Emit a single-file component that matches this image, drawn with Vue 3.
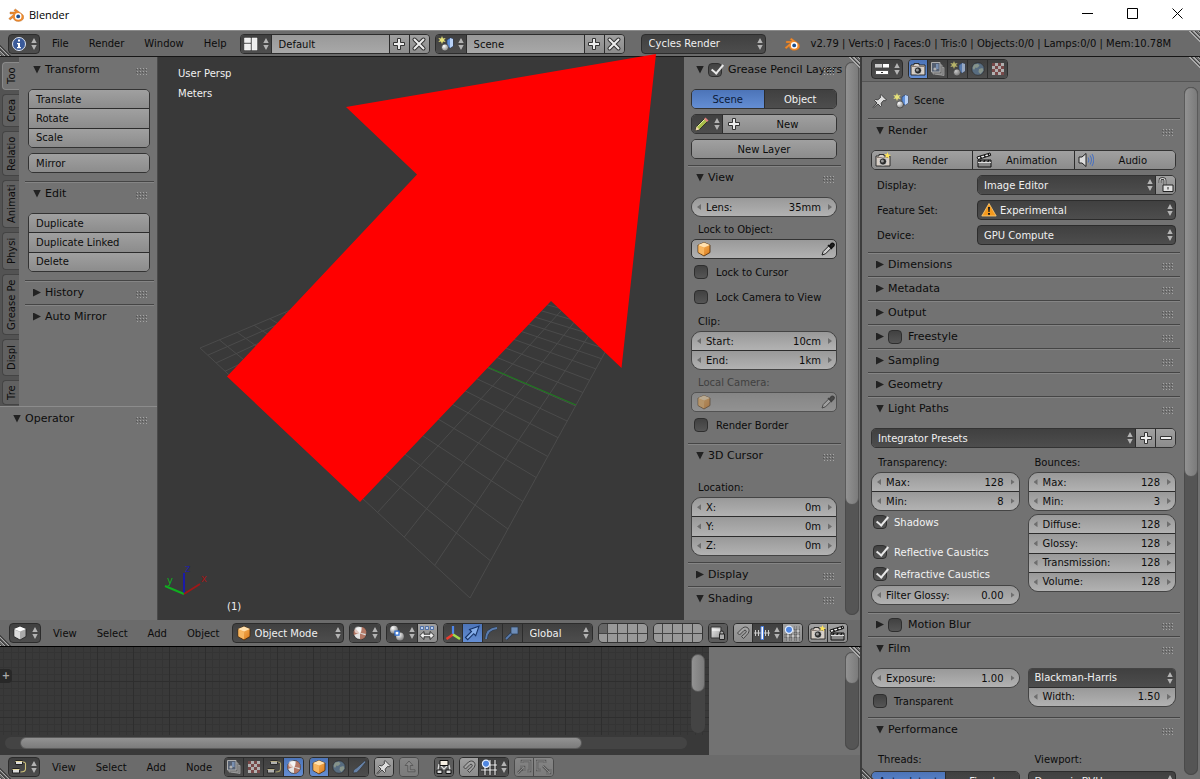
<template>
  <div class="app">
    <!-- Shared icon symbols -->
    <svg class="symbols" aria-hidden="true">
      <defs>
        <linearGradient id="g-orange" x1="0" y1="0" x2="1" y2="1">
          <stop offset="0" stop-color="#ffc46b" />
          <stop offset="1" stop-color="#d9781a" />
        </linearGradient>
        <radialGradient id="g-ball" cx=".35" cy=".3" r=".8">
          <stop offset="0" stop-color="#fff" />
          <stop offset="1" stop-color="#777" />
        </radialGradient>
        <linearGradient id="g-grey" x1="0" y1="0" x2="1" y2="1">
          <stop offset="0" stop-color="#eee" />
          <stop offset="1" stop-color="#999" />
        </linearGradient>
      </defs>
      <symbol id="i-updown" viewBox="0 0 6 14">
        <path d="M3 1l2.700 5H.3zM3 13l2.700-5H.3z" fill="#b4b4b4" />
      </symbol>
      <symbol id="i-grip" viewBox="0 0 12 7">
        <path d="M1 0h1v1H1zM4 0h1v1H4zM7 0h1v1H7zM10 0h1v1h-1zM1 3h1v1H1zM4 3h1v1H4zM7 3h1v1H7zM10 3h1v1h-1zM1 6h1v1H1zM4 6h1v1H4zM7 6h1v1H7zM10 6h1v1h-1z" fill="#a5a5a5" />
        <path d="M0 1h1v1H0zM3 1h1v1H3zM6 1h1v1H6zM9 1h1v1H9zM0 4h1v1H0zM3 4h1v1H3zM6 4h1v1H6zM9 4h1v1H9z" fill="#555" />
      </symbol>
      <symbol id="i-blender" viewBox="0 0 16 16">
        <path d="M.8 11.500L6 7H2V5h5.800L5.800 3.400 7.400 2l7 5.300c2.700 2.400 1.300 7-3.800 7.100-3.300.1-5.400-1.900-5.400-4L2.200 13z" fill="#ef8a2b" stroke="#a8652d" stroke-width=".4" />
        <circle cx="10.200" cy="9.400" r="3.300" fill="#fff" />
        <circle cx="10.200" cy="9.400" r="1.900" fill="#1d4f8f" />
      </symbol>
      <symbol id="i-info" viewBox="0 0 16 16">
        <circle cx="8" cy="8" r="6.500" fill="#3a5a9a" stroke="#dfe6f2" />
        <path d="M7 3.500h2v2H7zM6 7h3v4h1v1.200H6V11h1V8.200H6z" fill="#fff" />
      </symbol>
      <symbol id="i-layout" viewBox="0 0 16 16">
        <path d="M1.500 2h6v4.500h-6zM1.500 8h6v6h-6zM9 2h5v12H9z" fill="#eee" stroke="#fff" stroke-width=".5" />
      </symbol>
      <symbol id="i-scene" viewBox="0 0 16 16">
        <path d="M4 0l1 2.600L7.700 2 6 4l1.700 2L5 5.500 4 8 3 5.500.3 6 2 4 .3 2 3 2.600z" fill="#e6e27a" />
        <path d="M9 4l3-2 3 1v7l-3 2-3-1z" fill="#5f8fd8" stroke="#1f3667" stroke-width=".6" />
        <path d="M12 2l3 1v7l-3 2z" fill="#b9d2f7" />
        <circle cx="7" cy="11.500" r="3.500" fill="url(#g-ball)" stroke="#333" stroke-width=".6" />
      </symbol>
      <symbol id="i-plus" viewBox="0 0 16 16">
        <path d="M6.500 2.500h3v4h4v3h-4v4h-3v-4h-4v-3h4z" fill="#eee" stroke="#333" />
      </symbol>
      <symbol id="i-minus" viewBox="0 0 16 16">
        <path d="M2.500 6.500h11v3h-11z" fill="#eee" stroke="#333" />
      </symbol>
      <symbol id="i-x" viewBox="0 0 16 16">
        <path d="M3.500 3.500l9 9M12.500 3.500l-9 9" stroke="#333" stroke-width="4" stroke-linecap="round" />
        <path d="M3.500 3.500l9 9M12.500 3.500l-9 9" stroke="#eee" stroke-width="2" stroke-linecap="round" />
      </symbol>
      <symbol id="i-cube" viewBox="0 0 16 16">
        <path d="M2 4l6-2.500L14 4v7.500L8 15l-6-3.500z" fill="url(#g-orange)" stroke="#4a2a08" stroke-width=".8" />
        <path d="M2 4l6-2.500L14 4 8 6.500z" fill="#ffe0ae" />
        <path d="M2.500 4.800L8 7v7.200l-5.500-3z" fill="#f7b661" />
      </symbol>
      <symbol id="i-cube-grey" viewBox="0 0 16 16">
        <path d="M2 4l6-2.500L14 4v7.500L8 15l-6-3.500z" fill="#aaa" stroke="#222" stroke-width=".8" />
        <path d="M2 4l6-2.500L14 4 8 6.500z" fill="#fff" />
        <path d="M2.500 4.800L8 7v7.200l-5.500-3z" fill="#ddd" />
      </symbol>
      <symbol id="i-pencil" viewBox="0 0 16 16">
        <path d="M1.500 14.500l1-4L11 2l3 3-8.500 8.500z" fill="#a8bd4a" stroke="#222" stroke-width=".8" />
        <path d="M1.500 14.500l1-4 3 3z" fill="#eed7ae" />
        <path d="M10 3l1.500-1.500 3 3L13 6z" fill="#e08080" />
        <path d="M3.500 10.500l7-7" stroke="#e3eda2" />
      </symbol>
      <symbol id="i-dropper" viewBox="0 0 16 16">
        <path d="M2 14l1.200-3.500L9 4.700l2.300 2.300-5.800 5.800z" fill="#ccc" stroke="#222" />
        <path d="M8 4l4 4M9.500 5l2-2.500c1-1.200 3.500.8 2.400 2.200L11.500 7z" stroke="#111" stroke-width="1.500" fill="#222" />
      </symbol>
      <symbol id="i-props" viewBox="0 0 16 16">
        <path d="M1 3h14v4H1zM1 9h14v5H1z" fill="#555" />
        <path d="M9 3h6v3.500H9z" fill="#fff" />
        <path d="M1 3h7v3.500H1z" fill="#ccc" />
        <path d="M2 10h12v3H2z" fill="#fff" />
        <path d="M7 11h2v1H7z" fill="#333" />
      </symbol>
      <symbol id="i-camera" viewBox="0 0 16 16">
        <path d="M1 4h3V2.500h5V4h6v10H1z" fill="#d8cfc6" stroke="#222" stroke-width=".9" />
        <path d="M1.500 5.500h13" stroke="#8a7d75" />
        <circle cx="8" cy="9.500" r="3.700" fill="#2b2b2b" stroke="#eee" stroke-width=".8" />
        <circle cx="7.400" cy="8.900" r="1.500" fill="#999" />
      </symbol>
      <symbol id="i-camera-new" viewBox="0 0 16 16">
        <use href="#i-camera" />
        <path d="M12.500 0l.9 2.400L16 3l-2.100 1.200.3 2.500-1.800-1.600-2.300 1 .9-2.200L9.300 2l2.400.2z" fill="#ffe55a" />
      </symbol>
      <symbol id="i-layers" viewBox="0 0 16 16">
        <path d="M5 5l9 1.500v8L5 13z" fill="#888" stroke="#ccc" stroke-width=".8" />
        <path d="M3 3l9 1v9H3z" fill="#777" stroke="#ccc" stroke-width=".8" />
        <path d="M1.500 1.500h8.500v9.500H1.500z" fill="#5d6d86" stroke="#ddd" />
        <circle cx="5" cy="8" r="1.600" fill="#ddd" />
        <path d="M6 3h2.500v5H6z" fill="#8fb0e0" />
      </symbol>
      <symbol id="i-world" viewBox="0 0 16 16">
        <circle cx="8" cy="8" r="6.300" fill="#5f7c99" stroke="#222" stroke-width=".7" />
        <path d="M4 3.500l4-.8 1.500 2L7 7 5.500 6.500 4 9 2.500 7zM9 8l3.500-1 1 2.500-3 3.500L8.500 11z" fill="#a3b5a8" />
      </symbol>
      <symbol id="i-checker" viewBox="0 0 16 16">
        <path d="M2 2h12v12H2z" fill="#ddd" />
        <path d="M2 2h3v3H2zM8 2h3v3H8zM5 5h3v3H5zM11 5h3v3h-3zM2 8h3v3H2zM8 8h3v3H8zM5 11h3v3H5zM11 11h3v3h-3z" fill="#8f4a4a" />
      </symbol>
      <symbol id="i-pin" viewBox="0 0 16 16">
        <path d="M9 1.500l5.500 5.500-1.300.8-1.700-.3-2.300 2.700.3 2.300-1 1L6 11l-4.500 3.800L1 14.300 5 10 2.500 7.500l1-1 2.300.3 2.700-2.300-.3-1.700z" fill="#ddd" stroke="#333" stroke-width=".9" />
      </symbol>
      <symbol id="i-clap" viewBox="0 0 16 16">
        <path d="M2 8h13v7H2z" fill="#888" stroke="#111" />
        <path d="M1 5l13-4 .8 2.300L2 7.500z" fill="#eee" stroke="#111" />
        <path d="M4 4l1.500 2.400M8 3l1.500 2M12 1.800L13.400 4M5 8l-1.500 2.500M9 8l-1.500 2.500M13 8l-1.500 2.500" stroke="#111" stroke-width="1.400" />
        <path d="M2 10.500h13" stroke="#ddd" />
      </symbol>
      <symbol id="i-audio" viewBox="0 0 16 16">
        <path d="M1 5h3l4-3.500v13L4 11H1z" fill="#ddd" stroke="#222" />
        <path d="M10 5.500q1.700 2.500 0 5M12 3.500q3 4.500 0 9M14 2q3.500 6 0 12" fill="none" stroke="#4f74bd" stroke-width="1.100" />
      </symbol>
      <symbol id="i-lock" viewBox="0 0 16 16">
        <path d="M2 6V3.500q0-2 2.500-2T7 3.500V8" fill="none" stroke="#222" stroke-width="2.600" />
        <path d="M2 6V3.500q0-2 2.500-2T7 3.500V8" fill="none" stroke="#ddd" stroke-width="1.200" />
        <path d="M5 8h10v6.500H5z" fill="#e2e2e2" stroke="#222" />
        <path d="M9.500 10h1v2.500h-1z" fill="#222" />
      </symbol>
      <symbol id="i-warn" viewBox="0 0 16 16">
        <path d="M8 1.500L15.200 14H.8z" fill="#f59a1e" stroke="#ffcf7a" stroke-width=".8" />
        <path d="M7 5h2l-.4 5H7.400zM7 11h2v1.800H7z" fill="#1a1a1a" />
      </symbol>
      <symbol id="i-material" viewBox="0 0 16 16">
        <circle cx="8" cy="8" r="6.500" fill="#e4e4e4" stroke="#222" stroke-width=".7" />
        <path d="M8.500 8L10 1.800A6.500 6.500 0 0 1 14.300 9zM8 8.500L14 10.500A6.500 6.500 0 0 1 8 14.500zM7.500 8L1.800 10A6.500 6.500 0 0 1 3.500 3.500z" fill="#a8644f" opacity=".85" />
        <circle cx="6" cy="5" r="3.500" fill="#fff" opacity=".6" />
      </symbol>
      <symbol id="i-pivot" viewBox="0 0 16 16">
        <circle cx="5" cy="4.700" r="3.900" fill="url(#g-ball)" />
        <circle cx="11" cy="11.500" r="3.900" fill="url(#g-ball)" />
        <path d="M6 6.200h4v4H6z" fill="#fff" stroke="#2f6fd0" stroke-width="1.300" />
      </symbol>
      <symbol id="i-manip" viewBox="0 0 16 16">
        <path d="M1.500 1.500h3v3h-3zM6.500 1.500h3v3h-3zM11.500 1.500h3v3h-3z" fill="#bcd0f0" stroke="#3a5f9f" stroke-width=".8" />
        <path d="M.8 10.500L5 6.500v2.700h6V6.500l4.200 4-4.200 4v-2.700H5v2.700z" fill="#eee" stroke="#222" stroke-width=".9" />
      </symbol>
      <symbol id="i-axes" viewBox="0 0 16 16">
        <path d="M8 9.500V1" stroke="#4f86ea" stroke-width="2.200" />
        <path d="M8 9.500L1.500 14" stroke="#ea3b2e" stroke-width="2.600" />
        <path d="M8 9.500L15 14" stroke="#a5dc4a" stroke-width="2.600" />
      </symbol>
      <symbol id="i-arrow" viewBox="0 0 16 16">
        <path d="M1.500 12.500L7.500 6.500 5.500 4.500 15 1.200 11.700 10.700 9.700 8.700 3.700 14.700z" fill="#85aeea" stroke="#173468" stroke-width="1.100" />
      </symbol>
      <symbol id="i-arc" viewBox="0 0 16 16">
        <path d="M2 14Q2.500 4 13 3" fill="none" stroke="#29394f" stroke-width="3.200" />
        <path d="M2 14Q2.500 4 13 3" fill="none" stroke="#5a7cae" stroke-width="1.800" />
      </symbol>
      <symbol id="i-scale" viewBox="0 0 16 16">
        <path d="M2 14l7-7" stroke="#29394f" stroke-width="3.200" />
        <path d="M2 14l7-7" stroke="#5a7cae" stroke-width="1.800" />
        <path d="M7 2h7v7H7z" fill="#6d8db8" stroke="#29394f" stroke-width=".7" />
      </symbol>
      <symbol id="i-locklayer" viewBox="0 0 16 16">
        <path d="M1 2h10v11H1z" fill="url(#g-grey)" stroke="#333" />
        <path d="M2 5h8" stroke="#fff" />
        <path d="M10 9V7.500q0-1.500 1.800-1.500t1.800 1.500V9M9.500 9h5v5.500h-5z" fill="#aaa" stroke="#222" />
      </symbol>
      <symbol id="i-magnet" viewBox="0 0 16 16">
        <path d="M2.500 8l5-5c4.500-3 8.500 1.500 5.500 5.500L8.500 13.500 6.500 11.500l4.500-4c1-1.500-.5-3-2-2L4.500 10z" fill="#a5a5a5" stroke="#444" />
      </symbol>
      <symbol id="i-snapinc" viewBox="0 0 16 16">
        <path d="M0 8h16M1.500 5v6M4.500 5v6M11.500 5v6M14.500 5v6" stroke="#ccc" />
        <path d="M7 1.500h2.500v13H7z" fill="#fff" stroke="#4a7fe0" />
      </symbol>
      <symbol id="i-snapgrid" viewBox="0 0 16 16">
        <path d="M0 11h16M4 6v10M9 1v15M14 1v15M7 6h9" stroke="#222" stroke-width="2.400" />
        <path d="M0 11h16M4 6v10M9 1v15M14 1v15M7 6h9" stroke="#eee" stroke-width="1.200" />
        <circle cx="5" cy="4.700" r="3.600" fill="#4f86e0" stroke="#e5eefc" stroke-width="1.200" />
      </symbol>
      <symbol id="i-nodes" viewBox="0 0 16 16">
        <path d="M4.500 1.500h7v4h-7zM1.500 9.500h7v4.500h-7z" fill="#ddd" stroke="#222" />
        <path d="M4.500 2.500h7M1.500 10.500h7" stroke="#e6d9a0" />
        <path d="M12 3q3 0 2.500 3v4q0 3-5 3" fill="none" stroke="#ccc079" stroke-width="1.100" />
      </symbol>
      <symbol id="i-brush" viewBox="0 0 16 16">
        <path d="M2 14q0-4 3.500-5L13.500 2q2-.5 1 1.500L8 11.500Q6 14.500 2 14z" fill="#6682a8" stroke="#333" stroke-width=".7" />
      </symbol>
      <symbol id="i-up" viewBox="0 0 16 16">
        <path d="M8 2l4 4.500H9.200v4.300H14v2H6.800V6.500H4z" fill="#aaa" stroke="#444" stroke-width=".9" />
      </symbol>
      <symbol id="i-backdrop" viewBox="0 0 16 16">
        <path d="M3 5l-1 6M13 6l1 5M5 7l3 3 3-3" stroke="#ddd" stroke-width="1.300" fill="none" />
        <path d="M4 1.500h8v5H4z" fill="#f5eee2" stroke="#111" />
        <path d="M1 11h5v3.500H1zM10 11h5v3.500h-5z" fill="#ddd" stroke="#111" />
      </symbol>
      <symbol id="i-copy" viewBox="0 0 16 16">
        <path d="M6 4V2h8v10h-3M2 14l6-6M4 8h4v4" fill="none" stroke="#444" stroke-width="2.600" />
        <path d="M6 4V2h8v10h-3M2 14l6-6M4 8h4v4" fill="none" stroke="#aaa" />
      </symbol>
      <symbol id="i-paste" viewBox="0 0 16 16">
        <path d="M9 4V2H1v9h4M7 7l7 7M14 10v4h-4" fill="none" stroke="#444" stroke-width="2.600" />
        <path d="M9 4V2H1v9h4M7 7l7 7M14 10v4h-4" fill="none" stroke="#aaa" />
      </symbol>
    </svg>

    <!-- Window title bar -->
    <header class="titlebar">
      <svg class="icon"><use href="#i-blender" /></svg>
      <span class="window-title">Blender</span>
      <button class="win-btn" aria-label="Minimize"><svg viewBox="0 0 11 11"><path d="M0 5.500h11" /></svg></button>
      <button class="win-btn" aria-label="Maximize"><svg viewBox="0 0 11 11"><path d="M.5.5h10v10H.5z" /></svg></button>
      <button class="win-btn" aria-label="Close"><svg viewBox="0 0 11 11"><path d="M.5.5l10 10M10.500.5l-10 10" /></svg></button>
    </header>

    <!-- Info header -->
    <nav class="bar info-bar">
      <button class="editor-btn" aria-label="Editor type"><svg class="icon"><use href="#i-info" /></svg><svg class="updown"><use href="#i-updown" /></svg></button>
      <div class="menus">
        <button v-for="m in ['File', 'Render', 'Window', 'Help']" :key="m" class="menu-btn">{{ m }}</button>
      </div>
      <div v-for="b in dataBlocks" :key="b.value" class="datablock">
        <button class="dark picker" :aria-label="b.label"><svg class="icon"><use :href="b.icon" /></svg><svg class="updown"><use href="#i-updown" /></svg></button>
        <input type="text" :aria-label="b.label" :value="b.value" />
        <button class="light sq" aria-label="Add"><svg class="icon"><use href="#i-plus" /></svg></button>
        <button class="light sq" aria-label="Remove"><svg class="icon"><use href="#i-x" /></svg></button>
      </div>
      <span class="drop engine">
        <select aria-label="Render engine"><option>Cycles Render</option></select>
        <svg class="updown"><use href="#i-updown" /></svg>
      </span>
      <svg class="icon logo"><use href="#i-blender" /></svg>
      <span class="stats">v2.79 | Verts:0 | Faces:0 | Tris:0 | Objects:0/0 | Lamps:0/0 | Mem:10.78M</span>
      <i class="corner bl"></i><i class="corner tr"></i>
    </nav>

    <div class="main">
      <div class="left">
        <div class="view3d">
          <!-- Tool shelf -->
          <aside class="shelf">
            <div class="shelf-top">
              <div class="tabs">
                <button v-for="(t, i) in tabs" :key="t.name" class="tab" :class="{ active: i === 0 }" :style="{ height: t.size + 'px' }">{{ t.name }}</button>
              </div>
              <div class="shelf-panels">
                <section class="panel">
                  <h3><i class="tri open"></i><span>Transform</span><svg class="grip"><use href="#i-grip" /></svg></h3>
                  <div class="body">
                    <div class="group n3 left-text"><button class="light">Translate</button><button class="light">Rotate</button><button class="light">Scale</button></div>
                    <div class="group n1 left-text"><button class="light">Mirror</button></div>
                  </div>
                </section>
                <section class="panel">
                  <h3><i class="tri open"></i><span>Edit</span><svg class="grip"><use href="#i-grip" /></svg></h3>
                  <div class="body">
                    <div class="group n3 left-text"><button class="light">Duplicate</button><button class="light">Duplicate Linked</button><button class="light">Delete</button></div>
                  </div>
                </section>
                <section v-for="t in ['History', 'Auto Mirror']" :key="t" class="panel">
                  <h3><i class="tri"></i><span>{{ t }}</span><svg class="grip"><use href="#i-grip" /></svg></h3>
                </section>
              </div>
            </div>
            <section class="operator">
              <h3><i class="tri open"></i><span>Operator</span><svg class="grip"><use href="#i-grip" /></svg></h3>
            </section>
          </aside>

          <!-- Viewport -->
          <div class="viewport">
            <svg class="scene" viewBox="158 57 526 563" preserveAspectRatio="xMidYMid slice">
              <path :d="gridPath" stroke="#4b4b4b" fill="none" />
              <path d="M485 366L576 405" stroke="#1f7a1f" stroke-width="1.200" />
              <path d="M656 54L346 107 417 174.500 227 376.500 360 502 551 301 621.500 368z" fill="#f00" />
              <g stroke-width="2">
                <path d="M184 594V573" stroke="#1a1aa8" />
                <path d="M184 594L165 586" stroke="#0fae1f" />
                <path d="M184 594L200 584" stroke="#a01818" />
              </g>
              <g font-size="10">
                <text x="185" y="572" fill="#2020a0">z</text>
                <text x="167" y="584" fill="#0fae1f">y</text>
                <text x="201" y="582" fill="#a01818">x</text>
              </g>
            </svg>
            <div class="overlay"><span>User Persp</span><span>Meters</span></div>
            <span class="frame">(1)</span>
          </div>

          <!-- Properties region of the 3D view -->
          <aside class="npanel">
            <div class="panels">
              <section class="panel">
                <h3><i class="tri open"></i><label><input type="checkbox" checked /><span>Grease Pencil Layers</span></label><svg class="grip"><use href="#i-grip" /></svg></h3>
                <div class="body">
                  <div class="group n1 row"><button class="blue">Scene</button><button class="dark">Object</button></div>
                  <div class="group n1 row">
                    <button class="dark picker" aria-label="Browse grease pencil"><svg class="icon"><use href="#i-pencil" /></svg><svg class="updown"><use href="#i-updown" /></svg></button>
                    <button class="light with-icon"><svg class="icon"><use href="#i-plus" /></svg><span>New</span></button>
                  </div>
                  <div class="group n1"><button class="light">New Layer</button></div>
                </div>
              </section>
              <section class="panel">
                <h3><i class="tri open"></i><span>View</span><svg class="grip"><use href="#i-grip" /></svg></h3>
                <div class="body tight">
                  <div class="group round n1"><label class="num"><span>Lens:</span><input type="text" value="35mm" /></label></div>
                  <label class="caption" for="lock-object">Lock to Object:</label>
                  <div class="group n1 row objfield"><svg class="icon"><use href="#i-cube" /></svg><input id="lock-object" type="text" /><svg class="icon"><use href="#i-dropper" /></svg></div>
                  <label class="check"><input type="checkbox" /><span>Lock to Cursor</span></label>
                  <label class="check"><input type="checkbox" /><span>Lock Camera to View</span></label>
                  <span class="caption">Clip:</span>
                  <div class="group round n2">
                    <label class="num"><span>Start:</span><input type="text" value="10cm" /></label>
                    <label class="num"><span>End:</span><input type="text" value="1km" /></label>
                  </div>
                  <label class="caption off" for="local-camera">Local Camera:</label>
                  <div class="group n1 row objfield off"><svg class="icon"><use href="#i-cube" /></svg><input id="local-camera" type="text" disabled /><svg class="icon"><use href="#i-dropper" /></svg></div>
                  <label class="check"><input type="checkbox" /><span>Render Border</span></label>
                </div>
              </section>
              <section class="panel">
                <h3><i class="tri open"></i><span>3D Cursor</span><svg class="grip"><use href="#i-grip" /></svg></h3>
                <div class="body tight">
                  <span class="caption">Location:</span>
                  <div class="group round n3">
                    <label v-for="a in ['X:', 'Y:', 'Z:']" :key="a" class="num"><span>{{ a }}</span><input type="text" value="0m" /></label>
                  </div>
                </div>
              </section>
              <section class="panel">
                <h3><i class="tri"></i><span>Display</span><svg class="grip"><use href="#i-grip" /></svg></h3>
              </section>
              <section class="panel">
                <h3><i class="tri open"></i><span>Shading</span><svg class="grip"><use href="#i-grip" /></svg></h3>
              </section>
            </div>
            <div class="scroll"><i class="thumb n-thumb"></i></div>
            <i class="corner tr"></i>
          </aside>
        </div>

        <!-- 3D view header -->
        <nav class="bar view-bar">
          <button class="editor-btn" aria-label="Editor type"><svg class="icon"><use href="#i-cube-grey" /></svg><svg class="updown"><use href="#i-updown" /></svg></button>
          <div class="menus">
            <button v-for="m in ['View', 'Select', 'Add', 'Object']" :key="m" class="menu-btn">{{ m }}</button>
          </div>
          <span class="drop mode"><svg class="icon"><use href="#i-cube" /></svg>
            <select aria-label="Mode"><option>Object Mode</option></select>
            <svg class="updown"><use href="#i-updown" /></svg>
          </span>
          <div class="tools"><button class="dark picker" aria-label="Shading"><svg class="icon"><use href="#i-material" /></svg><svg class="updown"><use href="#i-updown" /></svg></button></div>
          <div class="tools">
            <button class="dark picker" aria-label="Pivot"><svg class="icon"><use href="#i-pivot" /></svg><svg class="updown"><use href="#i-updown" /></svg></button>
            <button class="light sq" aria-label="Manipulate centers"><svg class="icon"><use href="#i-manip" /></svg></button>
          </div>
          <div class="tools">
            <button class="dark sq" aria-label="Manipulator"><svg class="icon"><use href="#i-axes" /></svg></button>
            <button class="blue sq" aria-label="Translate"><svg class="icon"><use href="#i-arrow" /></svg></button>
            <button class="dark sq" aria-label="Rotate"><svg class="icon"><use href="#i-arc" /></svg></button>
            <button class="dark sq" aria-label="Scale"><svg class="icon"><use href="#i-scale" /></svg></button>
            <span class="drop orient">
              <select aria-label="Orientation"><option>Global</option></select>
              <svg class="updown"><use href="#i-updown" /></svg>
            </span>
          </div>
          <div v-for="g in 2" :key="g" class="layers">
            <button v-for="n in 10" :key="n" :class="{ on: g === 1 && n === 1 }" :aria-label="'Layer ' + n"></button>
          </div>
          <div class="tools"><button class="mid sq" aria-label="Lock layers"><svg class="icon"><use href="#i-locklayer" /></svg></button></div>
          <div class="tools">
            <button class="light sq" aria-label="Snap"><svg class="icon"><use href="#i-magnet" /></svg></button>
            <button class="dark picker" aria-label="Snap element"><svg class="icon"><use href="#i-snapinc" /></svg><svg class="updown"><use href="#i-updown" /></svg></button>
            <button class="light sq" aria-label="Absolute snap"><svg class="icon"><use href="#i-snapgrid" /></svg></button>
          </div>
          <div class="tools">
            <button class="light sq" aria-label="Render image"><svg class="icon"><use href="#i-camera-new" /></svg></button>
            <button class="light sq" aria-label="Render animation"><svg class="icon"><use href="#i-clap" /></svg></button>
          </div>
          <i class="corner bl"></i>
        </nav>

        <!-- Node editor -->
        <div class="nodes">
          <div class="canvas">
            <svg class="node-grid">
              <defs>
                <pattern id="cells" x="25" y="34" width="36" height="36" patternUnits="userSpaceOnUse">
                  <path d="M7.500 0v36M14.500 0v36M22.500 0v36M29.500 0v36M0 7.500h36M0 14.500h36M0 22.500h36M0 29.500h36" stroke="#343434" />
                  <path d="M.5 0v36M0 .5h36" stroke="#2e2e2e" />
                </pattern>
              </defs>
              <rect width="100%" height="100%" fill="url(#cells)" />
            </svg>
            <button class="expand" aria-label="Show region">+</button>
            <div class="scroll v"><i class="thumb nv-thumb"></i></div>
            <div class="scroll h"><i class="thumb nh-thumb"></i></div>
          </div>
          <div class="node-side"><div class="scroll"><i class="thumb side-thumb"></i></div><i class="corner tr"></i></div>
        </div>

        <nav class="bar node-bar">
          <button class="editor-btn" aria-label="Editor type"><svg class="icon"><use href="#i-nodes" /></svg><svg class="updown"><use href="#i-updown" /></svg></button>
          <div class="menus">
            <button v-for="m in ['View', 'Select', 'Add', 'Node']" :key="m" class="menu-btn">{{ m }}</button>
          </div>
          <div class="tools">
            <button class="dark sq dim" aria-label="Compositing"><svg class="icon"><use href="#i-layers" /></svg></button>
            <button class="dark sq dim" aria-label="Texture"><svg class="icon"><use href="#i-checker" /></svg></button>
            <button class="dark sq dim" aria-label="Node tree"><svg class="icon"><use href="#i-nodes" /></svg></button>
            <button class="blue sq" aria-label="Shader"><svg class="icon"><use href="#i-material" /></svg></button>
          </div>
          <div class="tools">
            <button class="blue sq" aria-label="Object"><svg class="icon"><use href="#i-cube" /></svg></button>
            <button class="dark sq dim" aria-label="World"><svg class="icon"><use href="#i-world" /></svg></button>
            <button class="dark sq" aria-label="Line style"><svg class="icon"><use href="#i-brush" /></svg></button>
          </div>
          <div class="tools"><button class="light sq" aria-label="Pin"><svg class="icon"><use href="#i-pin" /></svg></button></div>
          <div class="tools faded"><button class="light sq" aria-label="Parent node tree"><svg class="icon"><use href="#i-up" /></svg></button></div>
          <div class="tools spaced"><button class="mid sq" aria-label="Auto offset"><svg class="icon"><use href="#i-backdrop" /></svg></button></div>
          <div class="tools">
            <button class="light sq" aria-label="Snap"><svg class="icon"><use href="#i-magnet" /></svg></button>
            <button class="dark picker" aria-label="Snap node element"><svg class="icon"><use href="#i-snapgrid" /></svg><svg class="updown"><use href="#i-updown" /></svg></button>
          </div>
          <div class="tools faded">
            <button class="light sq" aria-label="Copy"><svg class="icon"><use href="#i-copy" /></svg></button>
            <button class="light sq" aria-label="Paste"><svg class="icon"><use href="#i-paste" /></svg></button>
          </div>
          <i class="corner bl"></i>
        </nav>
      </div>

      <!-- Properties editor -->
      <aside class="props">
        <nav class="bar props-bar">
          <button class="editor-btn" aria-label="Editor type"><svg class="icon"><use href="#i-props" /></svg><svg class="updown"><use href="#i-updown" /></svg></button>
          <div class="tools">
            <button class="blue sq" aria-label="Render"><svg class="icon"><use href="#i-camera" /></svg></button>
            <button class="dark sq dim" aria-label="Render layers"><svg class="icon"><use href="#i-layers" /></svg></button>
            <button class="dark sq dim" aria-label="Scene"><svg class="icon"><use href="#i-scene" /></svg></button>
            <button class="dark sq dim" aria-label="World"><svg class="icon"><use href="#i-world" /></svg></button>
            <button class="dark sq dim" aria-label="Texture"><svg class="icon"><use href="#i-checker" /></svg></button>
          </div>
          <i class="corner tr"></i>
        </nav>
        <div class="props-body">
          <div class="panels">
            <div class="crumb"><svg class="icon"><use href="#i-pin" /></svg><svg class="icon"><use href="#i-scene" /></svg><span>Scene</span></div>
            <section class="panel">
              <h3><i class="tri open"></i><span>Render</span><svg class="grip"><use href="#i-grip" /></svg></h3>
              <div class="body">
                <div class="group n1 row">
                  <button class="light with-icon"><svg class="icon"><use href="#i-camera-new" /></svg><span>Render</span></button>
                  <button class="light with-icon"><svg class="icon"><use href="#i-clap" /></svg><span>Animation</span></button>
                  <button class="light with-icon"><svg class="icon"><use href="#i-audio" /></svg><span>Audio</span></button>
                </div>
                <div class="field">
                  <label for="display">Display:</label>
                  <div class="group n1 row">
                    <span class="drop"><select id="display"><option>Image Editor</option></select><svg class="updown"><use href="#i-updown" /></svg></span>
                    <button class="light sq" aria-label="Lock interface"><svg class="icon"><use href="#i-lock" /></svg></button>
                  </div>
                </div>
                <div class="field">
                  <label for="feature">Feature Set:</label>
                  <span class="drop"><svg class="icon"><use href="#i-warn" /></svg><select id="feature"><option>Experimental</option></select><svg class="updown"><use href="#i-updown" /></svg></span>
                </div>
                <div class="field">
                  <label for="device">Device:</label>
                  <span class="drop"><select id="device"><option>GPU Compute</option></select><svg class="updown"><use href="#i-updown" /></svg></span>
                </div>
              </div>
            </section>
            <section v-for="p in collapsed" :key="p.title" class="panel">
              <h3>
                <i class="tri"></i>
                <label v-if="p.toggle"><input type="checkbox" /><span>{{ p.title }}</span></label>
                <span v-else>{{ p.title }}</span>
                <svg class="grip"><use href="#i-grip" /></svg>
              </h3>
            </section>
            <section class="panel">
              <h3><i class="tri open"></i><span>Light Paths</span><svg class="grip"><use href="#i-grip" /></svg></h3>
              <div class="body tight">
                <div class="group n1 row">
                  <span class="drop"><select aria-label="Presets"><option>Integrator Presets</option></select><svg class="updown"><use href="#i-updown" /></svg></span>
                  <button class="light sq" aria-label="Add preset"><svg class="icon"><use href="#i-plus" /></svg></button>
                  <button class="light sq" aria-label="Remove preset"><svg class="icon"><use href="#i-minus" /></svg></button>
                </div>
                <div class="cols">
                  <div class="col">
                    <span class="caption">Transparency:</span>
                    <div class="group round n2">
                      <label class="num"><span>Max:</span><input type="text" value="128" /></label>
                      <label class="num"><span>Min:</span><input type="text" value="8" /></label>
                    </div>
                    <label class="check lit first"><input type="checkbox" checked /><span>Shadows</span></label>
                    <label class="check lit"><input type="checkbox" checked /><span>Reflective Caustics</span></label>
                    <label class="check lit"><input type="checkbox" checked /><span>Refractive Caustics</span></label>
                    <div class="group round n1"><label class="num"><span>Filter Glossy:</span><input type="text" value="0.00" /></label></div>
                  </div>
                  <div class="col">
                    <span class="caption">Bounces:</span>
                    <div class="group round n2">
                      <label class="num"><span>Max:</span><input type="text" value="128" /></label>
                      <label class="num"><span>Min:</span><input type="text" value="3" /></label>
                    </div>
                    <div class="group round n4 below">
                      <label v-for="b in ['Diffuse:', 'Glossy:', 'Transmission:', 'Volume:']" :key="b" class="num"><span>{{ b }}</span><input type="text" value="128" /></label>
                    </div>
                  </div>
                </div>
              </div>
            </section>
            <section class="panel">
              <h3><i class="tri"></i><label><input type="checkbox" /><span>Motion Blur</span></label><svg class="grip"><use href="#i-grip" /></svg></h3>
            </section>
            <section class="panel">
              <h3><i class="tri open"></i><span>Film</span><svg class="grip"><use href="#i-grip" /></svg></h3>
              <div class="body tight short">
                <div class="cols">
                  <div class="col">
                    <div class="group round n1"><label class="num"><span>Exposure:</span><input type="text" value="1.00" /></label></div>
                    <label class="check"><input type="checkbox" /><span>Transparent</span></label>
                  </div>
                  <div class="col">
                    <div class="group round n2 mixed">
                      <span class="drop"><select aria-label="Pixel filter"><option>Blackman-Harris</option></select><svg class="updown"><use href="#i-updown" /></svg></span>
                      <label class="num"><span>Width:</span><input type="text" value="1.50" /></label>
                    </div>
                  </div>
                </div>
              </div>
            </section>
            <section class="panel">
              <h3><i class="tri open"></i><span>Performance</span><svg class="grip"><use href="#i-grip" /></svg></h3>
              <div class="body tight">
                <div class="cols">
                  <div class="col">
                    <span class="caption">Threads:</span>
                    <div class="group n1 row"><button class="blue">Auto-detect</button><button class="dark">Fixed</button></div>
                  </div>
                  <div class="col">
                    <label class="caption" for="bvh">Viewport:</label>
                    <span class="drop"><select id="bvh"><option>Dynamic BVH</option></select><svg class="updown"><use href="#i-updown" /></svg></span>
                  </div>
                </div>
              </div>
            </section>
          </div>
          <div class="scroll"><i class="thumb p-thumb"></i></div>
          <i class="corner bl"></i>
        </div>
      </aside>
    </div>
  </div>
</template>

<script setup>
const dataBlocks = [
  { label: 'Screen layout', value: 'Default', icon: '#i-layout' },
  { label: 'Scene', value: 'Scene', icon: '#i-scene' }
]

const tabs = [
  { name: 'Too', size: 28 },
  { name: 'Crea', size: 33 },
  { name: 'Relatio', size: 45 },
  { name: 'Animati', size: 48 },
  { name: 'Physi', size: 38 },
  { name: 'Grease Pe', size: 61 },
  { name: 'Displ', size: 37 },
  { name: 'Tre', size: 25 }
]

const collapsed = [
  { title: 'Dimensions' },
  { title: 'Metadata' },
  { title: 'Output' },
  { title: 'Freestyle', toggle: true },
  { title: 'Sampling' },
  { title: 'Geometry' }
]

// Floor grid: projects a unit square onto the four screen corners
const corners = { left: [200, 348], bottom: [470, 598], right: [620, 325], top: [400, 264] }
const CELLS = 16

function project(u, v) {
  const [x0, y0] = corners.left
  const [x1, y1] = corners.bottom
  const [x2, y2] = corners.right
  const [x3, y3] = corners.top
  const dx1 = x1 - x2
  const dx2 = x3 - x2
  const dx3 = x0 - x1 + x2 - x3
  const dy1 = y1 - y2
  const dy2 = y3 - y2
  const dy3 = y0 - y1 + y2 - y3
  const det = dx1 * dy2 - dx2 * dy1
  const g = (dx3 * dy2 - dx2 * dy3) / det
  const h = (dx1 * dy3 - dx3 * dy1) / det
  const w = g * u + h * v + 1
  const x = ((x1 - x0 + g * x1) * u + (x3 - x0 + h * x3) * v + x0) / w
  const y = ((y1 - y0 + g * y1) * u + (y3 - y0 + h * y3) * v + y0) / w
  return x.toFixed(1) + ' ' + y.toFixed(1)
}

let gridPath = ''
for (let i = 0; i <= CELLS; i++) {
  const t = i / CELLS
  gridPath += `M${project(t, 0)}L${project(t, 1)}M${project(0, t)}L${project(1, t)}`
}
</script>

<style>
body {
  margin: 0;
  overflow: hidden;
}
</style>

<style scoped>
.app {
  display: flex;
  flex-direction: column;
  height: 100vh;
  overflow: hidden;
  background: #727272;
  color: #0c0c0c;
  font: 10px/14px "DejaVu Sans", sans-serif;
}

.app * {
  box-sizing: border-box;
}

.symbols {
  position: absolute;
  width: 0;
  height: 0;
}

button,
input,
select {
  margin: 0;
  padding: 1px 0 0;
  border: 0;
  border-radius: 0;
  font: inherit;
  color: inherit;
  background: none;
}

.icon {
  flex: none;
  width: 16px;
  height: 16px;
}

.updown {
  flex: none;
  width: 6px;
  height: 14px;
}

/* Title bar */
.titlebar {
  display: flex;
  flex: none;
  align-items: center;
  height: 30px;
  padding-left: 8px;
  background: #fff;
  color: #000;
}

.window-title {
  flex: 1;
  padding-left: 5px;
  font: 11px/16px "Open Sans", sans-serif;
}

.win-btn {
  width: 45px;
  height: 28px;
}

.win-btn svg {
  width: 11px;
  height: 11px;
  fill: none;
  stroke: #000;
}

/* Headers */
.bar {
  position: relative;
  display: flex;
  flex: none;
  align-items: center;
  gap: 5px;
  height: 26px;
  padding-left: 9px;
  background: #6b6b6b;
}

.info-bar {
  height: 27px;
  padding-left: 8px;
  border-top: 1px solid #8a8a8a;
  border-bottom: 1px solid #161616;
}

.view-bar {
  height: 27px;
  border-bottom: 1px solid #000;
}

.node-bar {
  height: 24px;
  padding-left: 8px;
}

.editor-btn,
.tools,
.datablock,
.drop {
  display: flex;
  flex: none;
  align-items: center;
  height: 20px;
  border: 1px solid #2c2c2c;
  border-radius: 4px;
  overflow: hidden;
}

.editor-btn,
.picker {
  justify-content: center;
  gap: 4px;
  width: 32px;
  padding: 0;
}

.editor-btn,
.dark,
.drop {
  background: linear-gradient(#404040, #4d4d4d);
  color: #eee;
}

.mid {
  background: #5c5c5c;
}

.light {
  background: linear-gradient(#a0a0a0, #8c8c8c);
}

.blue {
  background: linear-gradient(#4c74b8, #648ed4);
  color: #0b1a38;
}

.menus {
  display: flex;
  margin-left: -3px;
}

.menu-btn {
  padding: 1px 10px 0;
  line-height: 20px;
}

.info-bar .menus {
  margin-right: -2px;
}

.picker {
  display: flex;
  flex: none;
  align-items: center;
  width: 30px;
  height: 100%;
}

.sq {
  display: flex;
  flex: none;
  align-items: center;
  justify-content: center;
  width: 20px;
  height: 100%;
  padding: 0;
}

.tools > * + *,
.datablock > * + *,
.row > * + * {
  border-left: 1px solid #2c2c2c;
}

.sq:first-child {
  width: 18px;
}

.dim .icon {
  opacity: 0.7;
}

.faded {
  opacity: 0.5;
}

.tools.spaced {
  margin-left: 10px;
}

.datablock {
  width: 190px;
}

.datablock input {
  flex: 1;
  min-width: 0;
  height: 100%;
  padding-left: 7px;
  background: linear-gradient(#999, #a8a8a8);
}

.drop {
  padding: 0 2px 0 6px;
}

.drop select {
  flex: 1;
  min-width: 0;
  height: 100%;
  appearance: none;
  color: #f0f0f0;
}

.drop .icon + select {
  padding-left: 3px;
}

.drop > .icon {
  margin-left: -3px;
}

.engine {
  width: 125px;
  margin-left: 11px;
}

.info-bar .engine {
  padding-left: 7px;
}

.logo {
  margin: 0 6px 0 13px;
}

.stats {
  padding-top: 1px;
  white-space: nowrap;
}

.view-bar .menus,
.node-bar .menus {
  margin-left: -3px;
  margin-right: -3px;
}

.mode {
  width: 112px;
}

.orient {
  width: 70px;
  height: 100%;
  border-width: 0 0 0 1px;
  border-radius: 0;
  padding: 0 3px 0 7px;
}

.layers {
  display: grid;
  grid-template-columns: repeat(5, 1fr);
  gap: 1px;
  width: 50px;
  height: 20px;
  border: 1px solid #333;
  border-radius: 5px;
  background: #444;
  overflow: hidden;
}

.layers button {
  background: #999;
}

.layers .on {
  background: #666;
}

/* Area corner handles */
.corner {
  position: absolute;
  width: 12px;
  height: 12px;
}

.corner.tr {
  top: 0;
  right: 0;
  background: repeating-linear-gradient(45deg, #aaa 0 1px, #444 1px 2px, #6b6b6b 2px 3px);
  clip-path: polygon(0 0, 100% 0, 100% 100%);
}

.corner.bl {
  bottom: 0;
  left: 0;
  background: repeating-linear-gradient(45deg, #aaa 0 1px, #444 1px 2px, #6b6b6b 2px 3px);
  clip-path: polygon(0 0, 100% 100%, 0 100%);
}

/* Main split */
.main {
  display: flex;
  flex: 1;
  min-height: 0;
}

.left {
  display: flex;
  flex: 1;
  flex-direction: column;
  min-width: 0;
}

.view3d {
  display: flex;
  flex: 1;
  min-height: 0;
}

/* Panels */
h3 {
  display: flex;
  align-items: center;
  height: 23px;
  margin: 0;
  padding: 0 6px 0 8px;
  font-size: 11px;
  font-weight: normal;
  white-space: nowrap;
}

h3 > span,
h3 > label {
  flex: 1;
  min-width: 0;
}

h3 label {
  display: flex;
  align-items: center;
  gap: 6px;
}

.grip {
  flex: none;
  width: 12px;
  height: 7px;
  margin-top: 3px;
}

.tri {
  flex: none;
  width: 8px;
  height: 8px;
  margin-right: 4px;
  background: #222;
  clip-path: polygon(0 0, 100% 50%, 0 100%);
}

.tri.open {
  clip-path: polygon(0 0, 100% 0, 50% 100%);
}

.panel {
  border-top: 1px solid #454545;
  box-shadow: inset 0 1px #858585;
}

.npanel .panel:first-child,
.shelf-panels > .panel:first-child {
  height: auto;
  border-top-color: transparent;
  box-shadow: none;
}

.body {
  display: flex;
  flex-direction: column;
  gap: 5px;
  padding: 8px 4px 7px 3px;
}

.body.tight {
  gap: 0;
}

.body.short {
  padding-bottom: 4px;
}

.shelf .body {
  padding-bottom: 8px;
}

.npanel .body {
  padding-bottom: 6px;
}

.group {
  display: flex;
  flex-direction: column;
  border: 1px solid #333;
  border-radius: 5px;
  overflow: hidden;
}

.group > * {
  flex: 1;
  min-height: 0;
}

.group:not(.row) > * + * {
  border-top: 1px solid #2c2c2c;
}

.group.row {
  flex-direction: row;
}

.group.row > .sq,
.group.row > .picker {
  flex: none;
}

.group.round {
  border-radius: 10px;
  border-color: #444;
}

.group.mixed {
  border-radius: 4px 4px 10px 10px;
}

.n1 {
  height: 20px;
}

.n2 {
  height: 39px;
}

.n3 {
  height: 59px;
}

.n4 {
  height: 78px;
}

.left-text button {
  padding-left: 7px;
  text-align: left;
}

.group .drop {
  height: auto;
  border-width: 0;
  border-radius: 0;
}

.group .dark {
  color: #f0f0f0;
}

.with-icon {
  display: flex;
  align-items: center;
  padding: 0 3px;
}

.with-icon span {
  flex: 1;
  padding-top: 1px;
}

.num {
  position: relative;
  display: flex;
  align-items: center;
  padding: 1px 15px 0 14px;
  background: linear-gradient(#999, #b2b2b2);
}

.num input {
  flex: 1;
  width: 0;
  min-width: 0;
  padding: 0;
  text-align: right;
}

.num::before,
.num::after {
  content: "";
  position: absolute;
  top: calc(50% - 3px);
  width: 4px;
  height: 6px;
  background: #6e6e6e;
}

.num::before {
  left: 5px;
  clip-path: polygon(100% 0, 0 50%, 100% 100%);
}

.num::after {
  right: 4px;
  clip-path: polygon(0 0, 100% 50%, 0 100%);
}

.num span {
  flex: none;
}

.caption {
  height: 22px;
  padding: 2px 0 0 7px;
  line-height: 22px;
}

.check {
  display: flex;
  align-items: center;
  gap: 8px;
  height: 25px;
  padding-left: 3px;
}

.check span {
  padding-top: 2px;
}

.lit {
  height: 22px;
  color: #f2f2f2;
}

.lit.first {
  margin-bottom: 8px;
}

input[type="checkbox"] {
  position: relative;
  flex: none;
  width: 14px;
  height: 14px;
  appearance: none;
  border: 1px solid #2e2e2e;
  border-radius: 4px;
  background: linear-gradient(#414141, #555);
}

input[type="checkbox"]:checked::after {
  content: "";
  position: absolute;
  top: -2px;
  left: 5px;
  width: 5px;
  height: 10px;
  border: solid #e8e8e8;
  border-width: 0 2px 2px 0;
  transform: rotate(40deg);
}

.objfield {
  align-items: center;
  padding: 0 0 0 4px;
  background: linear-gradient(#999, #b2b2b2);
}

.objfield > .icon {
  flex: none;
  border: 0;
}

.objfield > input {
  min-width: 0;
  border: 0;
}

.off {
  opacity: 0.5;
}

.scroll {
  position: relative;
  flex: none;
  width: 14px;
  border-radius: 7px;
  background: #555;
  box-shadow: inset 0 0 0 1px #4a4a4a;
}

.thumb {
  display: block;
  width: 100%;
  border: 1px solid #5a5a5a;
  border-radius: 7px;
  background: linear-gradient(90deg, #929292, #7b7b7b);
}

/* Tool shelf */
.shelf {
  display: grid;
  flex: none;
  grid-template-rows: 349px 1fr;
  width: 158px;
  border-right: 1px solid #4a4a4a;
}

.shelf-top {
  display: flex;
}

.tabs {
  display: flex;
  flex-direction: column;
  gap: 4px;
  width: 19px;
  padding: 5px 0 0 2px;
  background: #535353;
}

/* Rotated so the label reads upwards; the outer edge is the right border */
.tab {
  flex: none;
  width: 17px;
  padding: 0;
  border: 1px solid #444;
  border-left: 0;
  border-radius: 0 4px 4px 0;
  background: #616161;
  line-height: 15px;
  writing-mode: vertical-rl;
  rotate: 180deg;
}

.tab.active {
  border-color: #8a8a8a;
  background: #727272;
}

.shelf-panels {
  flex: 1;
  padding: 0 3px 0 6px;
}

.operator {
  border-top: 1px solid #8c8c8c;
}

.operator h3 {
  padding: 0 9px 0 13px;
}

/* Viewport */
.viewport {
  position: relative;
  flex: 1;
  min-width: 0;
  background: #393939;
  color: #f0f0f0;
}

.scene {
  position: absolute;
  inset: 0;
  z-index: 1;
  width: 100%;
  height: 100%;
  overflow: visible;
}

.overlay {
  display: flex;
  flex-direction: column;
  gap: 6px;
  padding: 10px 20px;
}

.frame {
  position: absolute;
  bottom: 6px;
  left: 69px;
}

/* Region on the right of the viewport */
.npanel {
  position: relative;
  display: flex;
  flex: none;
  width: 178px;
  padding-right: 1px;
  border-right: 2px solid #3c3c3c;
}

.npanel .panels {
  flex: 1;
  min-width: 0;
  padding: 0 4px;
  overflow: hidden;
}

.npanel .scroll {
  margin: 5px 0;
}

.n-thumb {
  height: 443px;
}

/* Node editor */
.nodes {
  display: flex;
  flex: none;
  height: 108px;
  border-right: 2px solid #3c3c3c;
}

.canvas {
  position: relative;
  display: grid;
  flex: 1;
  grid-template-columns: 1fr 14px;
  grid-template-rows: 1fr 14px;
  padding: 7px 4px 4px 5px;
  background: #393939;
}

.node-grid {
  position: absolute;
  inset: 0;
  width: 100%;
  height: 88px;
}

.expand {
  position: absolute;
  top: 22px;
  left: 0;
  width: 12px;
  height: 14px;
  padding: 0;
  border-radius: 0 4px 4px 0;
  background: #282828;
  color: #aaa;
  font-weight: bold;
}

.canvas .scroll {
  background: #444;
  box-shadow: none;
}

.canvas .v {
  grid-area: 1 / 2;
  margin-bottom: 4px;
}

.canvas .h {
  grid-area: 2 / 1;
  width: auto;
  height: 12px;
  margin-right: 4px;
  padding-left: 15px;
}

.nv-thumb {
  height: 38px;
}

.nh-thumb {
  width: 562px;
  height: 12px;
  background: linear-gradient(#929292, #7b7b7b);
}

.node-side {
  position: relative;
  display: flex;
  flex: none;
  justify-content: flex-end;
  width: 151px;
  padding: 5px 1px 5px 0;
}

.side-thumb {
  height: 32px;
}

.view-bar,
.node-bar {
  border-right: 2px solid #3c3c3c;
}

/* Properties editor */
.props {
  display: flex;
  flex: none;
  flex-direction: column;
  width: 338px;
  min-height: 0;
}

.props-bar {
  height: 25px;
  border-bottom: 1px solid #555;
}

.props-body {
  position: relative;
  display: flex;
  flex: 1;
  min-height: 0;
  padding-right: 2px;
}

.props-body .panels {
  flex: 1;
  min-width: 0;
  padding: 0 4px 0 6px;
  overflow: hidden;
}

.props-body .check {
  gap: 7px;
  padding-left: 2px;
}

.crumb {
  display: flex;
  align-items: center;
  gap: 5px;
  height: 36px;
  padding: 2px 0 0 4px;
}

.props-body .scroll {
  margin: 5px 0 4px;
}

.p-thumb {
  height: 390px;
}

.field {
  display: grid;
  grid-template-columns: 106px 1fr;
  align-items: center;
}

.field label {
  padding: 2px 0 0 6px;
}

.cols {
  display: grid;
  grid-template-columns: 1fr 1fr;
  gap: 8px;
}

.cols .caption {
  padding-top: 0;
}

.group + .cols .caption {
  height: 24px;
  padding-top: 4px;
}

.col {
  display: flex;
  flex-direction: column;
}

.below {
  margin-top: 3px;
}
</style>
